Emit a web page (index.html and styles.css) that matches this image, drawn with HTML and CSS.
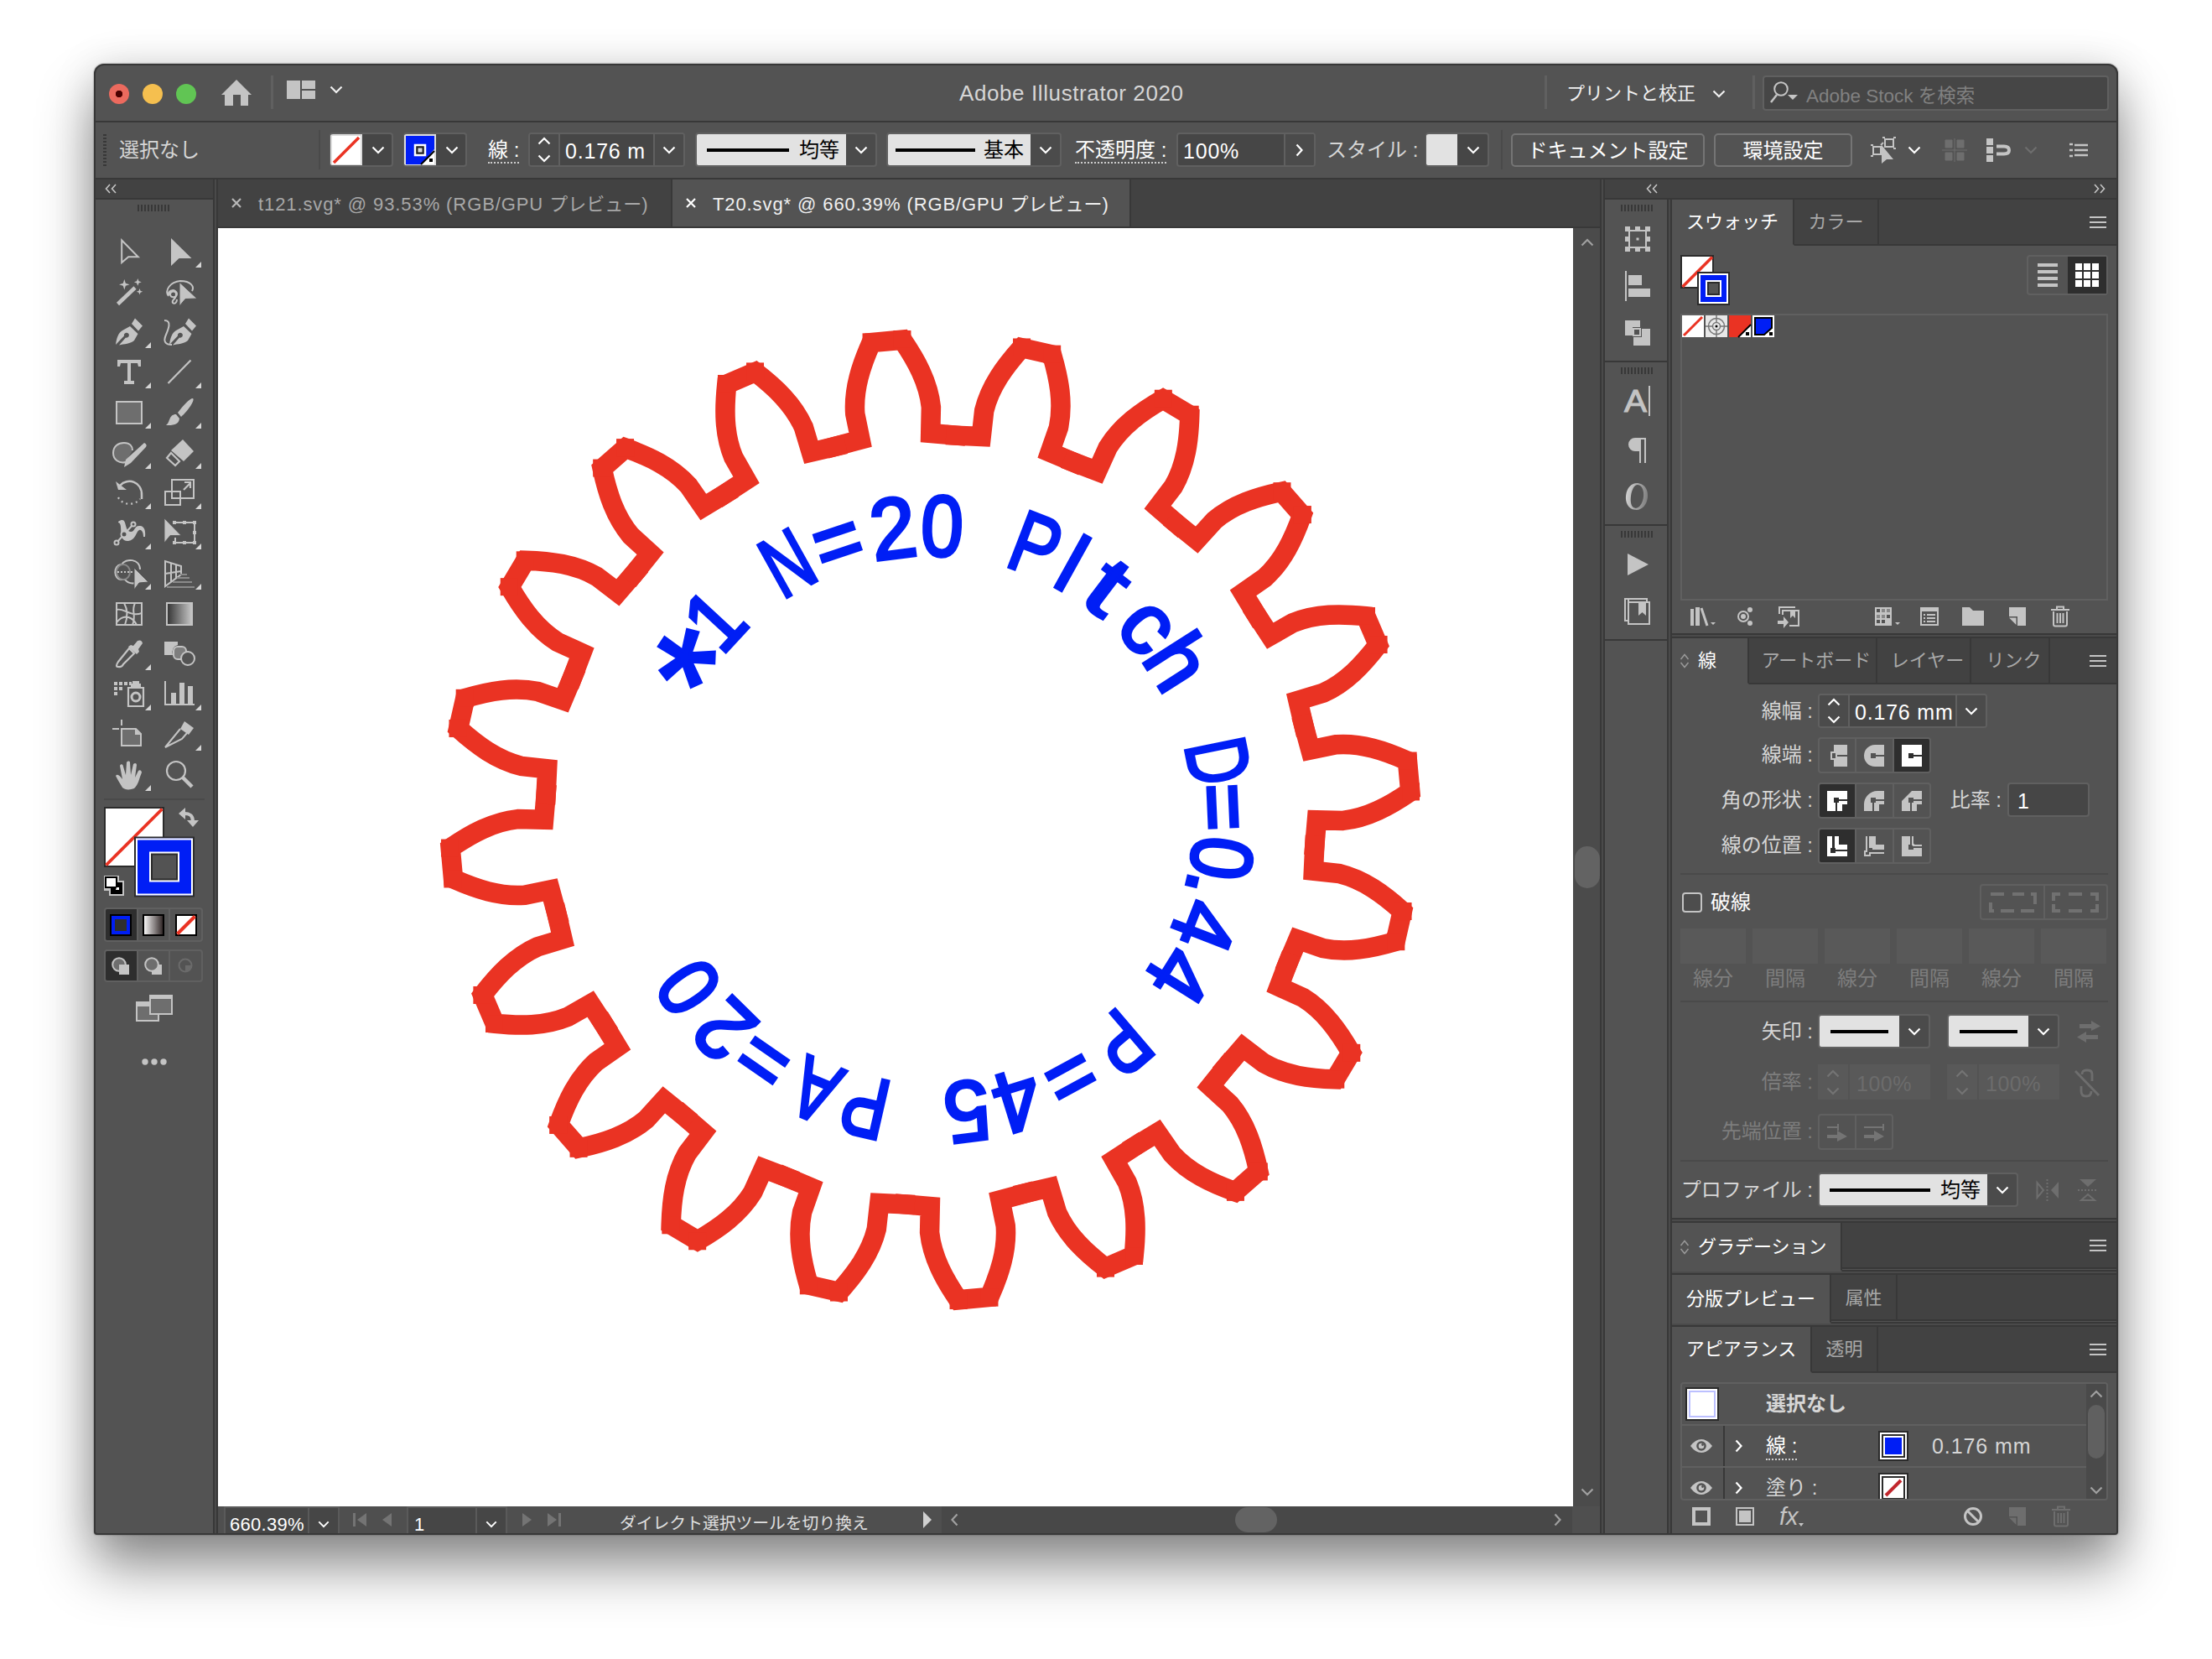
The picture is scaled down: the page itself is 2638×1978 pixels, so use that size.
FILE: index.html
```html
<!DOCTYPE html>
<html lang="ja">
<head>
<meta charset="utf-8">
<title>Adobe Illustrator 2020</title>
<link rel="stylesheet" href="styles.css">
</head>
<body>
<svg class="defs" width="0" height="0">
  <defs>
    <linearGradient id="gDark"><stop offset="0" stop-color="#333"/><stop offset="1" stop-color="#c8c8c8"/></linearGradient>
    <linearGradient id="gLight"><stop offset="0" stop-color="#fff"/><stop offset="1" stop-color="#2a2020"/></linearGradient>
    <linearGradient id="gO"><stop offset="0" stop-color="#d0d0d0"/><stop offset="1" stop-color="#808080"/></linearGradient>
  </defs>
  <symbol id="down" viewBox="0 0 16 10"><path d="M1.5 1.5 8 8l6.500-6.500" fill="none" stroke="currentColor" stroke-width="2.200"/></symbol>
  <symbol id="up" viewBox="0 0 16 10"><path d="M1.500 8.500 8 2l6.500 6.500" fill="none" stroke="currentColor" stroke-width="2.200"/></symbol>
  <symbol id="right" viewBox="0 0 10 16"><path d="M1.500 1.500 7.500 8l-6 6.500" fill="none" stroke="currentColor" stroke-width="2.200"/></symbol>
  <symbol id="left" viewBox="0 0 10 16"><path d="M8.500 1.500 2.500 8l6 6.500" fill="none" stroke="currentColor" stroke-width="2.200"/></symbol>
  <symbol id="dleft" viewBox="0 0 14 12"><path d="M6 1 1.500 6 6 11M13 1 8.500 6 13 11" fill="none" stroke="currentColor" stroke-width="1.600"/></symbol>
  <symbol id="dright" viewBox="0 0 14 12"><path d="M1 1 5.500 6 1 11M8 1l4.500 5L8 11" fill="none" stroke="currentColor" stroke-width="1.600"/></symbol>
  <symbol id="menu" viewBox="0 0 20 16"><path d="M0 2h20M0 8h20M0 14h20" stroke="currentColor" stroke-width="2"/></symbol>
  <symbol id="diamond" viewBox="0 0 12 18"><path d="M1.500 7 6 1.500 10.500 7M1.500 11 6 16.500 10.500 11" fill="none" stroke="currentColor" stroke-width="1.500"/></symbol>
  <symbol id="close" viewBox="0 0 12 12"><path d="M1 1l10 10M11 1 1 11" stroke="currentColor" stroke-width="2.200"/></symbol>
  <symbol id="corner" viewBox="0 0 60 48"><path d="M56 36v7h-7z" fill="#d6d6d6"/></symbol>
  <symbol id="trash" viewBox="0 0 22 26"><path d="M0 5h22M7 4V1.500h8V4M3 7v15.500q0 2 2 2h12q2 0 2-2V7M7.500 9v12M11 9v12M14.500 9v12" fill="none" stroke="currentColor" stroke-width="2"/></symbol>
  <symbol id="newpage" viewBox="0 0 20 22"><path d="M0 0h20v22H10V11H0z" fill="currentColor"/><path d="M0 12.500h8.500V21z" fill="currentColor"/></symbol>
  <symbol id="eye" viewBox="0 0 26 18"><path d="M0 9Q6 1 13 1t13 8q-6 8-13 8T0 9z" fill="currentColor"/><circle cx="13" cy="9" r="5.800" fill="#535353"/><circle cx="13" cy="9" r="3.300" fill="currentColor"/><circle cx="14.500" cy="7.500" r="1.400" fill="#535353"/></symbol>
</svg>

<div class="window">
  <header class="titlebar">
    <div class="lights"><i class="red"></i><i class="amber"></i><i class="green"></i></div>
    <svg class="home" width="36" height="32"><path d="M18 0 36 18h-4v13h-9V18h-9v13H4V18H0z" fill="#c4c4c4"/></svg>
    <i class="vsep"></i>
    <svg class="lay" width="34" height="22"><path d="M0 0h16v22H0zM18 0h16v10H18zM18 12h16v10H18z" fill="#c4c4c4"/></svg>
    <svg class="lchev" width="16" height="10"><use href="#down"/></svg>
    <span class="apptitle">Adobe Illustrator 2020</span>
    <i class="vsep"></i>
    <span class="workspace">プリントと校正</span>
    <svg class="wchev" width="16" height="10"><use href="#down"/></svg>
    <i class="vsep"></i>
    <div class="search"><svg width="36" height="30"><circle cx="14" cy="10" r="7.800" fill="none" stroke="#c4c4c4" stroke-width="2"/><path d="M9 17 2 26" stroke="#c4c4c4" stroke-width="2.500"/><path d="M22 17h12l-6 6z" fill="#c4c4c4"/></svg><span>Adobe Stock を検索</span></div>
  </header>

  <div class="control">
    <i class="dots"></i>
    <span class="lab sel">選択なし</span>
    <i class="dsep"></i>
    <div class="drop"><svg width="38" height="38"><path d="M0 0h38v38H0z" fill="#dcdcdc"/><path d="M2 2h34v34H2z" fill="#fff"/><path d="M4 34 34 4" stroke="#ea3323" stroke-width="3.500"/></svg><b><svg width="16" height="10"><use href="#down"/></svg></b></div>
    <div class="drop"><svg width="38" height="38"><path d="M0 0h38v38H0z" fill="#dcdcdc"/><path d="M2 2h34v34H2z" fill="#001ef5"/><path d="M13 13h12v12H13z" fill="#535353" stroke="#fff" stroke-width="2.500"/><path d="M15.500 15.500h7v7h-7z" fill="#ddd" stroke="#222" stroke-width="2"/><path d="M36 18v18H20z" fill="#fff"/><path d="M36 20 20 36" stroke="#000" stroke-width="2"/><path d="M30 29h4v4h-4z"/></svg><b><svg width="16" height="10"><use href="#down"/></svg></b></div>
    <span class="lab white under">線 :</span>
    <div class="spin w187"><b><svg width="16" height="10"><use href="#up"/></svg><svg width="16" height="10"><use href="#down"/></svg></b><em>0.176 m</em><b><svg width="16" height="10"><use href="#down"/></svg></b></div>
    <div class="brush w216"><u></u><span>均等</span><b><svg width="16" height="10"><use href="#down"/></svg></b></div>
    <div class="brush w209"><u></u><span>基本</span><b><svg width="16" height="10"><use href="#down"/></svg></b></div>
    <span class="lab white under">不透明度 :</span>
    <div class="spin w166"><em>100%</em><b><svg width="10" height="16"><use href="#right"/></svg></b></div>
    <span class="lab">スタイル :</span>
    <div class="drop"><i class="blank"></i><b><svg width="16" height="10"><use href="#down"/></svg></b></div>
    <i class="dsep"></i>
    <span class="btn w231">ドキュメント設定</span>
    <span class="btn w165">環境設定</span>
    <svg width="34" height="34" class="ic"><path d="M4 13h9v9H4zM18 4h10v9H18zM1 11h3M13 11l3-3M1 24h3M15 2h3M28 2h3M28 15h3" fill="none" stroke="#c4c4c4" stroke-width="2"/><path d="M14 11v22l6-5h8z" fill="#c4c4c4"/></svg>
    <svg width="16" height="10"><use href="#down"/></svg>
    <svg width="30" height="28" class="dim"><path d="M4 2h8v9H4zM18 2h8v9h-8zM4 17h8v9H4zM18 17h8v9h-8zM15 0v28M0 14h30" fill="currentColor" stroke="currentColor"/></svg>
    <svg width="30" height="28" class="ic"><path d="M0 0h8v8H0zM0 10h8v8H0zM0 20h8v8H0z" fill="currentColor"/><path d="M12 9.500h9q6 0 6 4.500t-6 4.500h-9" fill="none" stroke="currentColor" stroke-width="4"/></svg>
    <svg width="16" height="10" class="dim"><use href="#down"/></svg>
    <svg width="22" height="18" class="ic"><path d="M0 2h4M6 3h16M0 9h4M6 9h16M0 16h4M6 15h16" stroke="currentColor" stroke-width="2.500"/></svg>
  </div>

  <main>
    <aside class="toolcol">
      <div class="colhead"><svg width="14" height="12"><use href="#dleft"/></svg></div>
      <i class="grip"></i>
      <div class="tools">
        <svg><path d="M21.200 10.500v26.500l8-6.800h11.500z" fill="none" stroke="#c4c4c4" stroke-width="2"/></svg>
        <svg><path d="M20 8v33l9.500-9H44.500z"/><use href="#corner"/></svg>
        <svg><path d="M16.500 38.500 37 19" stroke="#c4c4c4" stroke-width="4.500"/><path d="M24.300 9l1.500 4.700 4.700 1.500-4.700 1.500-1.500 4.800-1.500-4.800-4.800-1.500 4.800-1.500zM40.300 8l1.200 3.200 3.300 1.100-3.300 1.200-1.200 3.300-1.200-3.300-3.200-1.200 3.200-1.100zM42.500 20l1 2.700 2.700 1-2.700 1-1 2.600-1-2.600-2.700-1 2.700-1z"/></svg>
        <svg><path d="M17 29c-5-7 2-17 14-18 13 0 17 7 14 12M17 28c0-8 9-7 10-2 0 5-8 6-8 1 0-4 7-5 7 0 0 7-6 6-4 10 2 2 5 0 5-4" fill="none" stroke="#c4c4c4" stroke-width="2"/><path d="M30 12.500V41l7-8.500 14-.5z" stroke="#535353"/></svg>
        <svg><path d="M14 39c1-8 3-14 8-17l9-5 9.500 9-4.500 8c-4 4-12 4-18 5.500l8-9a3 3 0 1 0-2-2zM33 14l4-6.500 9 9-5 6z"/><use href="#corner"/></svg>
        <svg><path d="M12 10c9 0 5 10 2 17-4 9 0 12 7 12" fill="none" stroke="#c4c4c4" stroke-width="2"/><path d="M18 39c1-8 3-14 8-17l9-5 9.500 9-4.500 8c-4 4-12 4-18 5.500l8-9a3 3 0 1 0-2-2zM37 14l4-6.500 9 9-5 6z"/></svg>
        <svg><path d="M16 9h28v8h-3l-1-4h-8v21h4v4H24v-4h4V13h-8l-1 4h-3z"/><use href="#corner"/></svg>
        <svg><path d="M16.500 37 43.500 9.500" stroke="#c4c4c4" stroke-width="2.200"/><use href="#corner"/></svg>
        <svg><path d="M15 11h30v26H15z" fill="#6e6e6e" stroke="#c4c4c4" stroke-width="2"/><use href="#corner"/></svg>
        <svg><path d="M46 7c3 2-6 15-14 22l-4-5c7-9 14-17 18-17zM26 26l4 5c-1 8-8 8-16 8 5-3 3-13 12-13z"/><use href="#corner"/></svg>
        <svg><path d="M26 35c-8 2-15-3-15-11s6-12 13-12 10 4 10 9" fill="#6e6e6e" stroke="#c4c4c4" stroke-width="2"/><path d="M48 12q4 2 2 5L32 36l-8 5 2-9z"/><use href="#corner"/></svg>
        <svg><path d="M34 8l13 14-12 12-15-13z"/><path d="M20 24l10 10-5 5-10-9z" fill="none" stroke="#c4c4c4" stroke-width="2.200"/><use href="#corner"/></svg>
        <svg><path d="M19 15c9-10 27-5 26 12v4" fill="none" stroke="#c4c4c4" stroke-width="2.500"/><path d="M14 10l3 10h10z"/><path d="M17 29c5 10 20 10 26 2" fill="none" stroke="#c4c4c4" stroke-width="2.200" stroke-dasharray="2 4"/><use href="#corner"/></svg>
        <svg><path d="M21 8h26v22H21zM13 22h18v16H13z" fill="none" stroke="#c4c4c4" stroke-width="2"/><path d="M35 20l8-8m-7-1h7v7" fill="none" stroke="#c4c4c4" stroke-width="2.200"/><use href="#corner"/></svg>
        <svg><path d="M17 10c12-8 6 12 15 12 5 0 4-7 10-7 6-1 8 6 7 13h-2c0-5-2-9-5-8-4 2-4 12-13 13-14 1-5-21-12-22z"/><path d="M15 35 35 13" stroke="#c4c4c4" stroke-width="2"/><g fill="#535353" stroke="#c4c4c4" stroke-width="2"><circle cx="15" cy="35" r="2.500"/><circle cx="35" cy="13" r="2.500"/><circle cx="24" cy="25" r="3.500"/></g><use href="#corner"/></svg>
        <svg><path d="M24 11h24v24H25v-6" fill="none" stroke="#c4c4c4" stroke-width="2"/><path d="M22 9h4v4h-4zM34 9h4v4h-4zM46 9h4v4h-4zM46 21h4v4h-4zM46 33h4v4h-4zM34 33h4v4h-4zM22 33h4v4h-4z"/><path d="M12 6v29l7-8.500h13z" stroke="#535353" stroke-width=".8"/><use href="#corner"/></svg>
        <svg><path d="M20 13c-9 1-9 18 1 18h4c4 5 9 5 13 4M21 13c5-8 22-7 22 6" fill="none" stroke="#c4c4c4" stroke-width="2"/><ellipse cx="23" cy="22" rx="8" ry="9" fill="none" stroke="#888" stroke-width="2"/><path d="M16 22h20" stroke="#c4c4c4" stroke-width="2" stroke-dasharray="2 2"/><path d="M36 17v26l6-8 11-1z" stroke="#535353"/><use href="#corner"/></svg>
        <svg><path d="M13 9v30l19-14V15zM20 11v23M26 13v16M13 24l19-3" fill="none" stroke="#c4c4c4" stroke-width="2"/><path d="M31 25h8M27 29h15M22 34h23M15 40h33" stroke="#8a8a8a" stroke-width="2"/><use href="#corner"/></svg>
        <svg><path d="M15 11h30v26H15z" fill="none" stroke="#c4c4c4" stroke-width="2"/><path d="M15 19c8-3 16 9 30 4M15 34c10-12 20-5 24 3M24 11c5 9 4 18 1 26M37 11c-5 10 2 14-3 26" fill="none" stroke="#c4c4c4" stroke-width="2"/></svg>
        <svg><path d="M15 11h30v26H15z" fill="url(#gDark)" stroke="#c4c4c4" stroke-width="2"/></svg>
        <svg><path d="M32 13l3 1 5-6q5-2 6 3l-5 7 1 3-3 3-10-9z"/><path d="M30 17 17 33q-4 6 0 6 4 1 6-3l13-13z" fill="none" stroke="#c4c4c4" stroke-width="2.200"/><use href="#corner"/></svg>
        <svg><path d="M12 9h16v4q-8 2-6 12H12z"/><rect x="23" y="15" width="15" height="15" rx="5" fill="#7e7e7e" stroke="#c4c4c4" stroke-width="2"/><circle cx="40" cy="29" r="8" fill="#535353" stroke="#c4c4c4" stroke-width="2"/></svg>
        <svg><path d="M29 16h18v22H29z" fill="none" stroke="#c4c4c4" stroke-width="2.200"/><circle cx="38" cy="27" r="5" fill="none" stroke="#c4c4c4" stroke-width="3"/><path d="M34 8h8v3h2v4H32v-4h2zM12 9h4v4h-4zM18 9h4v4h-4zM24 9h4v4h-4zM12 15h4v4h-4zM18 15h4v4h-4zM12 21h4v4h-4zM30 9h3v4h-3z"/><use href="#corner"/></svg>
        <svg><path d="M13 8v28h35" fill="none" stroke="#c4c4c4" stroke-width="2"/><path d="M20 22h6v14h-6zM30 10h6v26h-6zM40 14h6v22h-6z"/><use href="#corner"/></svg>
        <svg><path d="M21 17h17l6 6v14H21z" fill="#6e6e6e" stroke="#c4c4c4" stroke-width="2"/><path d="M37 17v7h7zM20 6h2v7h-2zM10 16h8v2h-8z"/></svg>
        <svg><path d="M36 8l11 8-6 8-10-7z"/><path d="M31 17 13 39l20-10 6-7" fill="none" stroke="#c4c4c4" stroke-width="2"/><use href="#corner"/></svg>
        <svg><path d="M22 39c-3-5-6-10-8-14 2-3 5 0 8 4L19 13c1-3 4-2 4 1l3 10 1-15c1-2 4-2 4 0l1 15 3-13c2-2 4-1 4 1l-2 15 4-8c2-2 4 0 4 2-3 7-4 15-9 19-5 2-11 2-14-1z"/><use href="#corner"/></svg>
        <svg><circle cx="26" cy="19" r="11" fill="none" stroke="#c4c4c4" stroke-width="2.200"/><path d="M34 27l11 11" stroke="#c4c4c4" stroke-width="4.500"/></svg>
      </div>
      <hr>
      <svg class="fillstroke" width="120" height="110">
        <path d="M1 1h70v70H1z" fill="#fff" stroke="#2b2b2b" stroke-width="2"/><path d="M2.500 69.500 69.500 2.500" stroke="#ea3323" stroke-width="3.800"/>
        <path d="M37 36.500h70v70H37z" fill="#001ef5" stroke="#2b2b2b" stroke-width="2"/><path d="M39 38.500h66v66H39z" fill="none" stroke="#fff" stroke-width="2"/><path d="M54 53.500h36v36H54z" fill="#fff"/><path d="M57 56.500h30v30H57z" fill="#535353" stroke="#2b2b2b" stroke-width="2"/>
        <path d="M94 8q12-1 12 9" fill="none" stroke="#c4c4c4" stroke-width="4"/><path d="M89 8l8-7v14zM99 16h14l-7 8z" fill="#c4c4c4"/>
        <path d="M0 82h18v6h6v18H6v-6H0z" fill="#c4c4c4"/><path d="M8 90h14v14H8z"/><path d="M2 84h13v12H2z" fill="#fff" stroke="#000" stroke-width="2"/><path d="M15 96h3v3h-4z" fill="#fff"/>
      </svg>
      <div class="trio t42">
        <span class="on"><svg width="26" height="26"><path d="M1 1h24v24H1z" stroke="#000" stroke-width="2" fill="#001ef5"/><path d="M6 6h14v14H6z" fill="#2f2f2f"/></svg></span>
        <span><svg width="26" height="26"><path d="M1 1h24v24H1z" stroke="#000" stroke-width="2" fill="url(#gLight)"/></svg></span>
        <span><svg width="26" height="26"><path d="M1 1h24v24H1z" stroke="#000" stroke-width="2" fill="#fff"/><path d="M2.500 23.500l21-21" stroke="#ea3323" stroke-width="4"/></svg></span>
      </div>
      <div class="trio t38">
        <span class="on"><svg width="22" height="22"><circle cx="9" cy="9" r="7.800" fill="#6e6e6e" stroke="#c4c4c4" stroke-width="2"/><path d="M9 9h12v12H9z" fill="#c4c4c4"/></svg></span>
        <span><svg width="22" height="22"><path d="M9 9h12v12H9z" fill="#c4c4c4"/><circle cx="9" cy="9" r="7.800" fill="#6e6e6e" stroke="#c4c4c4" stroke-width="2"/></svg></span>
        <span><svg width="22" height="22"><circle cx="10" cy="10" r="7.500" fill="none" stroke="#6b6b6b" stroke-width="2"/><path d="M10 10h7q0 6-7 7z" fill="#6b6b6b"/></svg></span>
      </div>
      <svg class="screens" width="44" height="32"><path d="M1 11h26v20H1z" fill="#6e6e6e" stroke="#c4c4c4" stroke-width="2"/><path d="M0 8h18v6H0z" fill="#c4c4c4"/><path d="M17 3h26v20H17z" fill="#6e6e6e" stroke="#c4c4c4" stroke-width="2"/><path d="M16 0h28v5H16z" fill="#c4c4c4"/></svg>
      <svg class="more" width="30" height="8"><circle cx="4" cy="4" r="3.700"/><circle cx="15" cy="4" r="3.700"/><circle cx="26" cy="4" r="3.700"/></svg>
    </aside>
    <i class="gutter"></i>

    <section class="doc">
      <nav class="doctabs">
        <div class="dtab first"><svg width="12" height="12"><use href="#close"/></svg><span><q>t121.svg* @ 93.53% (RGB/GPU </q>プレビュー)</span></div>
        <div class="dtab active"><svg width="12" height="12"><use href="#close"/></svg><span><q>T20.svg* @ 660.39% (RGB/GPU </q>プレビュー)</span></div>
      </nav>
      <div class="stage">
        <svg id="art" width="1616" height="1524" viewBox="260 272 1616 1524"></svg>
        <div class="vscroll"><svg width="16" height="10"><use href="#up"/></svg><i></i><svg width="16" height="10"><use href="#down"/></svg></div>
      </div>
      <footer class="status">
        <div class="sbox zoomv"><em>660.39%</em><b><svg width="14" height="9"><use href="#down"/></svg></b></div>
        <svg class="nav1" width="48" height="18"><path d="M1 1h3v16H1zM17 1v16L6 9zM47 1v16L36 9z"/></svg>
        <div class="sbox page"><em>1</em><b><svg width="14" height="9"><use href="#down"/></svg></b></div>
        <svg class="nav2" width="48" height="18"><path d="M1 1v16l11-8zM31 1v16l11-8zM44 1h3v16h-3z"/></svg>
        <span class="hint">ダイレクト選択ツールを切り換え</span>
        <svg class="play" width="12" height="20"><path d="M1 0v20l10-10z"/></svg>
        <div class="hscroll"><svg width="10" height="16"><use href="#left"/></svg><i></i><svg width="10" height="16"><use href="#right"/></svg></div>
      </footer>
    </section>
    <i class="gutter"></i>

    <section class="side">
      <div class="colhead"><svg width="14" height="12" class="h1"><use href="#dleft"/></svg><svg width="14" height="12"><use href="#dright"/></svg></div>
      <div class="sidegrid">
        <div class="strip">
          <div class="sgroup g1"><i class="grip"></i>
            <svg width="30" height="30"><path d="M5 5h20v20H5z" fill="none" stroke="#c4c4c4" stroke-width="2"/><path d="M0 0h6v6H0zM12 0h6v5h-6zM24 0h6v6h-6zM0 12h5v6H0zM25 12h5v6h-5zM0 24h6v6H0zM12 25h6v5h-6zM24 24h6v6h-6zM13.500 13.500h3v3h-3z"/></svg>
            <svg width="30" height="36"><path d="M0 0h2v36H0zM4 5h16v12H4zM4 21h26v10H4z"/></svg>
            <svg width="30" height="30"><path d="M0 0h18v8h-9v10H0zM20 10h10v20H10V20h10z"/><path d="M10 10h8v8h-8z" fill="none" stroke="#c4c4c4" stroke-width="2"/></svg>
          </div>
          <div class="sgroup g2"><i class="grip"></i>
            <svg width="30" height="36"><text x="-1" y="31" font-size="37" textLength="27" lengthAdjust="spacingAndGlyphs" font-family="Liberation Sans" stroke="#c4c4c4">A</text><path d="M28 0h2v36h-2z"/></svg>
            <svg width="24" height="30"><path d="M22 0v2h0v28h-2V2h-4v28h-2V16H9a8 8 0 0 1 0-16z"/></svg>
            <svg width="30" height="34"><g transform="rotate(8 14 17)"><path fill="url(#gO)" fill-rule="evenodd" d="M14 1c8 0 13 7 13 16s-5 16-13 16S1 26 1 17 6 1 14 1zm0 2c-5 0-7 7-7 14s2 14 7 14 8-7 8-14-3-14-8-14z"/></g></svg>
          </div>
          <div class="sgroup g3"><i class="grip"></i>
            <svg width="26" height="26"><path d="M1 0v26l25-13z"/></svg>
            <svg width="32" height="32"><path d="M5 5V1H1v26h4M5 5h25v26H5zM27 4V1H4" fill="none" stroke="#c4c4c4" stroke-width="2"/><path d="M17 5h9v16l-4.500-4-4.500 4z"/></svg>
          </div>
        </div>
        <i class="gutter"></i>

        <div class="panels">
          <section class="panel swatches">
            <nav class="ptabs"><span class="on w144">スウォッチ</span><span class="w101">カラー</span><svg width="20" height="16"><use href="#menu"/></svg></nav>
            <div class="swhead">
              <svg width="60" height="60"><path d="M1 1h38v38H1z" fill="#fff" stroke="#2b2b2b" stroke-width="2"/><path d="M2.500 38 38 2.500" stroke="#ea3323" stroke-width="3.500"/><path d="M21 21h37v38H21z" fill="#001ef5" stroke="#2b2b2b" stroke-width="2"/><path d="M23 23h33v34H23z" fill="none" stroke="#fff" stroke-width="2"/><path d="M31 31h17v18H31z" fill="#535353" stroke="#fff" stroke-width="2"/><path d="M33 33h13v14H33z" fill="none" stroke="#2b2b2b" stroke-width="2"/></svg>
              <div class="views"><span><svg width="24" height="28"><path d="M0 2h24M0 10h24M0 18h24M0 26h24" stroke="#c4c4c4" stroke-width="4"/></svg></span><span class="on"><svg width="28" height="28"><path d="M0 0h8v8H0zM10 0h8v8h-8zM20 0h8v8h-8zM0 10h8v8H0zM10 10h8v8h-8zM20 10h8v8h-8zM0 20h8v8H0zM10 20h8v8h-8zM20 20h8v8h-8z" fill="#fff"/></svg></span></div>
            </div>
            <div class="swlist">
              <svg width="26" height="26"><path d="M0 0h26v26H0z" fill="#fff"/><path d="M2 24 24 2" stroke="#ea3323" stroke-width="3"/></svg>
              <svg width="26" height="26"><path d="M0 0h26v26H0z" fill="#e8e8e8"/><g fill="none" stroke="#777" stroke-width="1.500"><circle cx="13" cy="13" r="9.500"/><circle cx="13" cy="13" r="4.500"/><path d="M13 0v9M13 17v9M0 13h9M17 13h9"/></g><circle cx="13" cy="13" r="1.500"/></svg>
              <svg width="26" height="26"><path d="M0 0h26v26H0z" fill="#ea3323"/><path d="M26 11v15H11z" fill="#fff"/><path d="M26 11 11 26" stroke="#000" stroke-width="2"/><path d="M20 20h4v4h-4z"/></svg>
              <svg width="26" height="26"><path d="M0 0h26v26H0z" fill="#fff"/><path d="M3 3h20v12l-9 8H3z" fill="#001ef5" stroke="#000" stroke-width="2"/><path d="M20 20h4v4h-4z"/></svg>
            </div>
            <div class="swfoot">
              <svg width="32" height="22"><path d="M0 2h4v20H0zM6 0h5v22H6z"/><path d="M13 1l7 21" stroke="#c4c4c4" stroke-width="3"/><path d="M24 18h6l-3 3z"/></svg>
              <svg width="18" height="22"><circle cx="7" cy="11" r="6" fill="none" stroke="#c4c4c4" stroke-width="2"/><circle cx="7" cy="11" r="3"/><circle cx="15" cy="3" r="3"/><circle cx="15" cy="19" r="3"/></svg>
              <svg width="26" height="24"><path d="M2 9V1h19M6 10V5h19v18H14" fill="none" stroke="#c4c4c4" stroke-width="2"/><path d="M15 5h6v9l-3-3-3 3zM0 17h7v-5l6 7-6 7v-5H0z"/></svg>
              <svg width="32" height="22"><path d="M0 0h20v22H0z"/><path d="M2 2h4v4H2zM14 9h4v4h-4zM8 15h4v4H8zM2 15h4v4H2z" fill="#535353"/><path d="M8 2h4v4H8zM14 2h4v4h-4zM2 9h4v4H2zM8 9h4v4H8z" fill="#888"/><path d="M24 18h6l-3 3z"/></svg>
              <svg width="22" height="22"><path d="M1 1h20v20H1z" fill="none" stroke="#c4c4c4" stroke-width="2"/><path d="M1 1h20v4H1zM4 8h2v2H4zM8 8h10v2H8zM4 12h2v2H4zM8 12h10v2H8zM4 16h2v2H4zM8 16h10v2H8z"/></svg>
              <svg width="26" height="22"><path d="M0 0h9l4 4h13v18H0z"/></svg>
              <svg width="20" height="22"><use href="#newpage"/></svg>
              <svg width="22" height="26"><use href="#trash"/></svg>
            </div>
          </section>

          <section class="panel stroke">
            <nav class="ptabs"><span class="on w90"><svg width="12" height="18"><use href="#diamond"/></svg>線</span><span class="w155">アートボード</span><span class="w112">レイヤー</span><span class="w94">リンク</span><svg width="20" height="16"><use href="#menu"/></svg></nav>
            <div class="row r1"><label>線幅 :</label><div class="spin w202"><b><svg width="16" height="10"><use href="#up"/></svg><svg width="16" height="10"><use href="#down"/></svg></b><em>0.176 mm</em><b><svg width="16" height="10"><use href="#down"/></svg></b></div></div>
            <div class="row r2"><label>線端 :</label><div class="trio b43">
              <span><svg width="24" height="26"><path d="M8 0h16v12H8zM8 14h16v12H8z"/><path d="M5 9h6v8H5z" fill="#535353" stroke="#c4c4c4" stroke-width="2"/></svg></span>
              <span><svg width="24" height="26"><path d="M24 0v12H14v-2H8v6h6v-2h10v12H13A13 13 0 0 1 13 0z"/></svg></span>
              <span class="on"><svg width="24" height="26"><path d="M0 0h24v12H14v-2H8v6h6v-2h10v12H0z"/></svg></span></div></div>
            <div class="row r3"><label>角の形状 :</label><div class="trio b43">
              <span class="on"><svg width="24" height="24"><path d="M0 0h24v10H14V8H8v6h2v10H0zM12 14h2v-2h10v4h-6v8h-6z"/></svg></span>
              <span><svg width="24" height="24"><path d="M24 0v10H14V8H8v6h2v10H0V16A16 16 0 0 1 16 0zM12 14h2v-2h10v4h-6v8h-6z"/></svg></span>
              <span><svg width="24" height="24"><path d="M12 0h12v10H14V8H8v6h2v10H0V12zM12 14h2v-2h10v4h-6v8h-6z"/></svg></span></div>
              <label class="ratio">比率 :</label><div class="spin w98"><em>1</em></div></div>
            <div class="row r4"><label>線の位置 :</label><div class="trio b43">
              <span class="on"><svg width="24" height="24"><path d="M0 0h6v14H4v6h6v-2h14v6H0zM9 0h5v10h10v6H10v-2H9z"/></svg></span>
              <span><svg width="24" height="24"><path d="M6 0h8v10h10v6H10v-2H6zM2 0h2v14H2z"/><path d="M3 14v4h-2v5h6v-3h17" fill="none" stroke="#c4c4c4" stroke-width="2"/></svg></span>
              <span><svg width="24" height="24"><path d="M0 0h10v10H8v6h6v-2h10v10H0z"/><path d="M13 0v10h1v1h10" fill="none" stroke="#c4c4c4" stroke-width="2"/></svg></span></div></div>
            <hr>
            <div class="dash"><i class="check"></i><span>破線</span><div class="pair"><span><svg width="56" height="24"><path d="M2 2h16M28 2h14M50 2h5v12M2 12v10h4M14 22h16M38 22h16" fill="none" stroke="#717171" stroke-width="4"/></svg></span><span><svg width="56" height="24"><path d="M2 10V2h8M20 2h16M46 2h8v8M54 14v8h-8M36 22H20M10 22H2v-8" fill="none" stroke="#717171" stroke-width="4"/></svg></span></div></div>
            <div class="dashgrid"><p><i></i>線分</p><p><i></i>間隔</p><p><i></i>線分</p><p><i></i>間隔</p><p><i></i>線分</p><p><i></i>間隔</p></div>
            <hr>
            <div class="row r5"><label>矢印 :</label><div class="brush w134"><u></u><b><svg width="16" height="10"><use href="#down"/></svg></b></div><div class="brush w134 second"><u></u><b><svg width="16" height="10"><use href="#down"/></svg></b></div>
              <svg class="dim swap" width="28" height="26"><path d="M3 4h14V0l11 6.500L17 12V9H3zM25 17H11v-4L0 19.500 11 26v-4h14z" fill="currentColor"/></svg></div>
            <div class="row r6 off"><label>倍率 :</label><div class="ghost"><b><svg width="16" height="10"><use href="#up"/></svg><svg width="16" height="10"><use href="#down"/></svg></b><em>100%</em></div><div class="ghost second"><b><svg width="16" height="10"><use href="#up"/></svg><svg width="16" height="10"><use href="#down"/></svg></b><em>100%</em></div>
              <svg class="dim link" width="30" height="34"><path d="M9 6q0-5 5-5h2q5 0 5 5v8M8 20v6q0 6 6 6t6-6M1 2l28 29" fill="none" stroke="currentColor" stroke-width="2.800"/></svg></div>
            <div class="row r7 off"><label>先端位置 :</label><div class="trio b43 two">
              <span><svg width="24" height="20"><path d="M0 4h13M13 0v8" stroke="#747474" stroke-width="2"/><path d="M0 13h12V8l12 7-12 6v-4H0z" fill="#747474"/></svg></span>
              <span><svg width="24" height="20"><path d="M0 4h23M23 0v8" stroke="#747474" stroke-width="2"/><path d="M0 13h12V8l12 7-12 6v-4H0z" fill="#747474"/></svg></span></div></div>
            <hr>
            <div class="row r8"><label>プロファイル :</label><div class="brush w239"><u></u><span>均等</span><b><svg width="16" height="10"><use href="#down"/></svg></b></div>
              <svg class="dim f1" width="28" height="26"><path d="M1.500 4v18L9 13z" fill="none" stroke="currentColor" stroke-width="2"/><path d="M27 3v20l-9-10z" fill="currentColor"/><path d="M13.500 0v26" stroke="currentColor" stroke-width="2" stroke-dasharray="2 2"/></svg>
              <svg class="dim f2" width="24" height="28"><path d="M2 1h20l-10 9z" fill="currentColor"/><path d="M4 26h16l-8-7z" fill="none" stroke="currentColor" stroke-width="2"/><path d="M0 14h24" stroke="currentColor" stroke-width="2" stroke-dasharray="2 2"/></svg></div>
          </section>

          <section class="panel slim"><nav class="ptabs"><span class="on w201"><svg width="12" height="18"><use href="#diamond"/></svg>グラデーション</span><svg width="20" height="16"><use href="#menu"/></svg></nav></section>
          <section class="panel slim"><nav class="ptabs"><span class="on w188">分版プレビュー</span><span class="w79">属性</span></nav></section>

          <section class="panel appear">
            <nav class="ptabs"><span class="on w166b">アピアランス</span><span class="w79">透明</span><svg width="20" height="16"><use href="#menu"/></svg></nav>
            <div class="alist">
              <div class="arows">
                <div class="arow head"><i class="thumb"></i><strong>選択なし</strong></div>
                <div class="arow"><svg width="26" height="18"><use href="#eye"/></svg><i></i><svg width="10" height="16" class="wh"><use href="#right"/></svg><span class="white"><s>線 :</s></span><svg width="36" height="36"><path d="M0 0h36v36H0z" fill="#2b2b2b"/><path d="M2 2h32v32H2z" fill="#fff"/><path d="M4 4h28v28H4z" fill="#2b2b2b"/><path d="M6 6h24v24H6z" fill="#fff"/><path d="M8 8h20v20H8z" fill="#001ef5"/></svg><q>0.176 mm</q></div>
                <div class="arow"><svg width="26" height="18"><use href="#eye"/></svg><i></i><svg width="10" height="16" class="wh"><use href="#right"/></svg><span>塗り :</span><svg width="36" height="36"><path d="M0 0h36v36H0z" fill="#2b2b2b"/><path d="M2 2h32v32H2z" fill="#fff"/><path d="M4 4h28v28H4z" fill="#2b2b2b"/><path d="M6 6h24v24H6z" fill="#fff"/><path d="M9 27 27 9" stroke="#c1272d" stroke-width="4"/></svg></div>
              </div>
              <div class="ascroll"><svg width="16" height="10"><use href="#up"/></svg><i></i><svg width="16" height="10"><use href="#down"/></svg></div>
            </div>
            <div class="afoot">
              <svg width="22" height="22"><path d="M2 2h18v18H2z" fill="none" stroke="#c4c4c4" stroke-width="4"/></svg>
              <svg width="22" height="22"><path d="M1 1h20v20H1z" fill="none" stroke="#c4c4c4" stroke-width="2"/><path d="M4 4h14v14H4z"/></svg>
              <span class="fx">fx<svg width="6" height="4"><path d="M0 0h6L3 4z"/></svg></span>
              <svg width="22" height="22"><circle cx="11" cy="11" r="9.500" fill="none" stroke="#c4c4c4" stroke-width="3"/><path d="M4.500 4.500l13 13" stroke="#c4c4c4" stroke-width="3"/></svg>
              <svg class="dim" width="20" height="22"><use href="#newpage"/></svg>
              <svg class="dim" width="22" height="26"><use href="#trash"/></svg>
            </div>
          </section>
        </div>
      </div>
    </section>
  </main>
</div>
<script src="art.js"></script>
</body>
</html>
```
FILE: styles.css
```css
* { box-sizing: border-box; }
html, body { margin: 0; background: #fff; }
body {
  width: 2638px; height: 1978px; overflow: hidden; padding: 76px 112px;
  font: 24px/1 "Liberation Sans", "Noto Sans CJK JP", sans-serif; color: #d6d6d6;
}
.defs { position: absolute; }
svg { display: block; flex: none; color: #c4c4c4; overflow: visible; }
i, em, s, q { font-style: normal; text-decoration: none; }
i, b { display: block; }
q { quotes: none; letter-spacing: .9px; }
.dim { color: #6e6e6e; }
.white { color: #fff; }

.window {
  width: 2414px; height: 1754px; border: 2px solid #383838; border-radius: 12px 12px 4px 4px;
  background: #535353; overflow: hidden;
  box-shadow: 0 0 2px rgba(0,0,0,.5), 0 38px 66px rgba(0,0,0,.44), 0 4px 50px rgba(0,0,0,.13);
}

/* title bar */
.titlebar {
  height: 68px; border-bottom: 2px solid #383838; padding-left: 16px;
  display: grid; align-items: center; justify-items: start;
  grid-template-columns: 134px 59px 19px 51px 751px 698px 26px 174px 48px 12px 1fr;
}
.lights { display: flex; gap: 16px; padding-top: 1px; }
.lights i { width: 24px; height: 24px; border-radius: 50%; background: #f5bf4f; }
.lights .red { background: radial-gradient(#4c0000 4px, #ec6a5e 4.500px); }
.lights .green { background: #61c554; }
.vsep { width: 3px; height: 40px; background: #606060; margin-bottom: 2px; }
.lay, .lchev { margin-bottom: 9px; }
.lchev, .wchev { color: #f0f0f0; }
.wchev { margin-top: 2px; }
.apptitle { font-size: 26px; letter-spacing: .6px; white-space: nowrap; }
.workspace { font-size: 22px; color: #f0f0f0; white-space: nowrap; padding-top: 1px; }
.search {
  width: 413px; height: 42px; border: 2px solid #606060; border-radius: 4px; background: #464646;
  display: flex; align-items: center; padding-left: 6px; gap: 8px; color: #818181; font-size: 22.500px; white-space: nowrap;
}
.search span { padding-top: 9px; }

/* control bar */
.control {
  height: 68px; border-bottom: 2px solid #383838; padding: 0 0 1px 9px;
  display: grid; align-items: center; justify-items: start; white-space: nowrap;
  grid-template-columns: 19px 238px 13px 88px 101px 48px 199px 228px 225px 121px 179px 118px 90px 12px 242px 186px 45px 41px 53px 45px 54px 1fr;
}
.control > svg:nth-child(18) { color: #fff; }
.dots { width: 4px; height: 38px; background: repeating-linear-gradient(#383838 0 2px, transparent 2px 4px); }
.dsep { width: 2px; height: 47px; background: #4a4a4a; }
.under { border-bottom: 2px dotted #ccc; padding-bottom: 2px; padding-top: 4px; }
.drop, .spin, .brush { display: flex; height: 41px; border: 2px solid #606060; border-radius: 4px; background: #464646; color: #fff; overflow: hidden; }
.drop { width: 76px; border-left-width: 1px; }
.drop b, .spin b, .brush b { width: 36px; flex: none; display: flex; flex-direction: column; align-items: center; justify-content: center; }
.drop b, .brush b { padding-left: 2px; }
.drop b svg, .spin b svg, .brush b svg { color: #fff; }
.blank { width: 38px; height: 38px; background: #e2e2e2; }
.spin b { gap: 11px; background: #4b4b4b; }
.spin em { flex: 1; padding: 8px 0 0 6px; font-size: 25px; letter-spacing: .8px; overflow: hidden; white-space: nowrap; }
.spin b:first-child { border-right: 2px solid #606060; }
.spin b:last-child { border-left: 2px solid #606060; }
.w187 { width: 187px; } .w216 { width: 217px; } .w209 { width: 209px; } .w166 { width: 166px; }
.w202 { width: 202px; } .w98 { width: 98px; } .w134 { width: 134px; } .w239 { width: 239px; }
.brush { color: #000; background: linear-gradient(90deg, #e2e2e2 0 calc(100% - 35px), #4b4b4b 0); align-items: center; padding-left: 12px; }
.brush u { flex: 1; height: 4px; background: #000; margin-right: 12px; }
.brush span { margin-right: 7px; }
.control .w209 u { margin-right: 10px; } .control .w209 { padding-left: 9px; }
.btn { height: 40px; border: 2px solid #757575; border-radius: 5px; color: #fff; text-align: center; line-height: 37px; }
.w231 { width: 231px; } .w165 { width: 165px; }

main { display: grid; grid-template-columns: 140px 6px 1648px 6px 610px; height: 1614px; }
.gutter { background: #4a4a4a; border: solid #383838; border-width: 0 2px; }
.colhead { height: 24px; background: #424242; border-bottom: 2px solid #383838; display: flex; align-items: center; justify-content: space-between; padding: 0 11px; }
.grip { width: 39px; height: 8px; background: repeating-linear-gradient(90deg, #383838 0 2px, transparent 2px 4px); }

/* tools */
.toolcol .grip { margin: 6px 0 0 50px; }
.tools { display: grid; grid-template-columns: 60px 60px; grid-auto-rows: 48px; margin: 24px 0 0 10px; }
.tools svg { width: 60px; height: 48px; fill: #c4c4c4; }
.toolcol hr { margin: 4px 10px 8px; border: 0; height: 2px; background: #4a4a4a; }
.fillstroke { margin-left: 10px; }
.trio { display: flex; border: 2px solid #606060; border-radius: 4px; overflow: hidden; }
.toolcol .trio { width: 118px; margin-left: 10px; }
.t42 { height: 41px; margin-top: 10px; } .t38 { height: 39px; margin-top: 9px; }
.trio span { flex: 1; display: flex; align-items: center; justify-content: center; }
.trio span + span { border-left: 2px solid #606060; }
.trio svg { fill: #c4c4c4; }
.trio .on { background: #2e2e2e; }
.b43 .on svg { fill: #fff; }
.screens { margin: 15px 0 0 48px; }
.more { margin: 44px 0 0 55px; fill: #c4c4c4; }

/* document */
.doc { display: grid; grid-template-rows: 58px 1524px 32px; }
.doctabs { display: flex; background: #424242; border-bottom: 2px solid #383838; }
.dtab { display: flex; align-items: center; gap: 20px; padding-left: 16px; font-size: 22px; color: #a8a8a8; border-right: 2px solid #383838; white-space: pre; }
.dtab span { padding-top: 3px; }
.dtab svg { color: #b8b8b8; }
.first { width: 542px; }
.dtab.active { width: 547px; background: #535353; color: #f0f0f0; }
.dtab.active svg { color: #fff; }
.stage { display: grid; grid-template-columns: 1616px 32px; }
#art { background: #fff; overflow: hidden; }
.vscroll { background: #4b4b4b; display: flex; flex-direction: column; align-items: center; justify-content: space-between; padding: 12px 0 12px 2px; }
.vscroll svg { color: #a0a0a0; }
.vscroll i { width: 30px; height: 50px; border-radius: 15px; background: #636363; }
.status { background: #4f4f4f; display: grid; justify-items: start; align-items: center; padding-left: 7px; overflow: hidden;
  grid-template-columns: 153px 65px 137px 117px 361px 23px 1fr; }
.sbox { display: flex; height: 32px; background: #464646; border: 2px solid #5a5a5a; border-bottom: 0; color: #fff; align-self: stretch; }
.sbox em { flex: 1; padding: 9px 0 0 5px; font-size: 22px; letter-spacing: .3px; }
.sbox b { width: 36px; display: flex; justify-content: center; padding-top: 15px; border-left: 2px solid #5a5a5a; }
.sbox b svg { color: #fff; }
.zoomv { width: 138px; } .page { width: 120px; } .page em { padding-left: 7px; }
.nav1, .nav2 { fill: #747474; }
.hint { font-size: 19.800px; padding-top: 9px; white-space: nowrap; color: #e0e0e0; }
.play { fill: #d0d0d0; }
.hscroll { width: 752px; height: 32px; background: #484848; display: grid; grid-template-columns: 340px 380px 10px; padding-left: 10px; align-items: center; }
.hscroll svg { color: #a0a0a0; }
.hscroll i { width: 50px; height: 30px; border-radius: 15px; background: #636363; }

/* dock */
.side .colhead { padding: 0 13px 0 49px; }
.sidegrid { display: grid; grid-template-columns: 74px 6px 530px; height: 1590px; }
.strip { background: #535353; }
.sgroup { border-bottom: 2px solid #383838; display: flex; flex-direction: column; align-items: center; padding: 6px 0 0 3px; fill: #c4c4c4; }
.g1 { height: 194px; } .g2 { height: 195px; } .g3 { height: 137px; }
.g1 svg:nth-child(2) { margin-top: 18px; } .g1 svg:nth-child(3) { margin-top: 23px; } .g1 svg:nth-child(4) { margin-top: 23px; }
.g2 svg:nth-child(2) { margin-top: 14px; } .g2 svg:nth-child(3) { margin-top: 26px; } .g2 svg:nth-child(4) { margin-top: 23px; }
.g3 svg:nth-child(2) { margin-top: 19px; } .g3 svg:nth-child(3) { margin-top: 27px; }

/* panels */
.panel { background: #535353; border-bottom: 2px solid #383838; margin-bottom: 2px; box-shadow: 0 2px #4a4a4a; }
.ptabs { height: 55px; display: flex; background: #424242; font-size: 22px; color: #a8a8a8; box-shadow: inset 0 -2px #383838; }
.ptabs span { display: flex; align-items: center; justify-content: center; padding-top: 1px; border-right: 2px solid #383838; border-bottom: 2px solid #383838; white-space: nowrap; }
.ptabs .on { background: #535353; color: #fff; border-bottom-color: #535353; }
.ptabs .on svg { margin-right: 10px; color: #999; }
.ptabs > svg { margin: 19px 12px 0 auto; }
.w144 { width: 146px; } .w101 { width: 101px; } .w90 { width: 92px; } .w155 { width: 153px; } .w112 { width: 112px; } .w94 { width: 94px; }
.ptabs .w155, .ptabs .w112, .ptabs .w94 { padding-left: 9px; }
.w201 { width: 203px; } .w188 { width: 190px; } .w79 { width: 79px; } .w166b { width: 167px; }
.ptabs .w90, .ptabs .w201 { justify-content: flex-start; padding-left: 9px; }
.swatches { height: 519px; }
.swhead { display: flex; justify-content: space-between; padding: 11px 10px 0 10px; }
.views { display: flex; width: 97px; height: 48px; border: 2px solid #606060; border-radius: 4px; }
.views span { flex: 1; display: flex; align-items: center; justify-content: center; }
.views .on { background: #2e2e2e; }
.swlist { margin: 10px 10px 0; height: 342px; border: 2px solid #606060; display: flex; gap: 2px; }
.swfoot { display: grid; padding: 3px 0 0 22px; height: 34px; fill: #c4c4c4; align-items: center; grid-template-columns: 56px 48px 116px 54px 50px 56px 50px 1fr; }
.stroke { height: 695px; }
.stroke .row { display: flex; }
.stroke label { width: 168px; text-align: right; margin-right: 6px; line-height: 42px; white-space: nowrap; }
.r1 { margin-top: 11px; } .r2 { margin-top: 10px; } .r3 { margin-top: 11px; } .r4 { margin-top: 11px; }
.trio.b43 { width: 135px; height: 43px; }
.trio.two { width: 90px; }
.stroke .ratio { width: 84px; margin-right: 7px; }
.w98 em { padding-left: 10px; }
.stroke hr { border: 0; height: 2px; background: #4a4a4a; margin: 11px 10px; }
.dash { display: flex; align-items: center; padding: 0 10px 0 12px; height: 43px; color: #fff; }
.check { width: 24px; height: 24px; border: 2px solid #c4c4c4; border-radius: 4px; background: #4d4d4d; margin-right: 10px; }
.pair { margin-left: auto; display: flex; width: 153px; height: 43px; border: 2px solid #606060; border-radius: 4px; }
.pair span { flex: 1; display: flex; align-items: center; justify-content: center; }
.pair span + span { border-left: 2px solid #606060; }
.dashgrid { display: grid; grid-template-columns: repeat(6, 78px); gap: 8px; padding: 10px 10px 0; color: #7d7d7d; text-align: center; height: 85px; }
.dashgrid p { margin: 0; }
.dashgrid i { height: 42px; background: #595959; margin-bottom: 6px; }
.dashgrid + hr { margin: 11px 10px 14px; }
.brush.w134 { padding-left: 13px; }
.second { margin-left: 20px; }
.swap { margin: 8px 0 0 21px; }
.r6 { margin-top: 18px; }
.off label { color: #7d7d7d; }
.ghost { display: flex; width: 134px; height: 42px; background: #595959; color: #6c6c6c; }
.ghost b { width: 38px; display: flex; flex-direction: column; gap: 11px; align-items: center; justify-content: center; border-right: 2px solid #535353; }
.ghost svg { color: #747474; }
.ghost em { padding: 11px 0 0 8px; font-size: 25px; letter-spacing: .5px; }
.link { margin: 6px 0 0 18px; }
.r7 { margin-top: 17px; }
.r7 + hr { margin: 12px 10px 13px; }
.f1 { margin: 8px 0 0 21px; } .f2 { margin: 7px 0 0 22px; }
.slim { height: 60px; }
.slim .on { height: 58px; }
.slim .ptabs span { padding-top: 2px; }
.panel:nth-child(n+2) { border-top: 2px solid #383838; }
.appear { height: 250px; border-bottom: 0; }
.alist { margin: 11px 10px 0; width: 510px; height: 141px; border: 2px solid #606060; border-radius: 4px; display: flex; overflow: hidden; }
.arows { flex: 1; }
.arow { height: 50px; border-bottom: 2px solid #606060; display: grid; grid-template-columns: 39px 14px 37px 134px 64px 1fr; padding-left: 10px; align-items: center; white-space: nowrap; }
.arow q { font-size: 25px; }
.arow > i { width: 2px; height: 48px; background: #383838; }
.arow.head { grid-template-columns: 96px 1fr; padding-left: 4px; }
.arow .thumb { width: 40px; height: 40px; border: 2px solid #2b2b2b; background: #fff; box-shadow: inset 0 0 0 2px #fff, inset 0 0 0 4px #bcc0ff; }
.arow .wh { color: #fff; }
.arow s { border-bottom: 2px dotted #ccc; padding-bottom: 2px; }
.ascroll { width: 24px; background: #4a4a4a; display: flex; flex-direction: column; align-items: center; padding: 7px 0; }
.ascroll i { width: 20px; height: 64px; border-radius: 10px; background: #606060; margin: 8px 0 33px; flex: none; }
.ascroll svg { color: #a0a0a0; }
.afoot { display: grid; grid-template-columns: 52px 52px 220px 54px 51px 1fr; padding-left: 24px; height: 38px; align-items: center; fill: #c4c4c4; }
.fx { font: italic 29px "Liberation Sans", sans-serif; color: #c4c4c4; display: flex; align-items: flex-end; }
.fx svg { margin-bottom: 5px; }
```
FILE: art.js
```js
// Draws the T20 gear artwork: twenty teeth plus the lettering ring.
(function () {
  var ns = 'http://www.w3.org/2000/svg';
  var art = document.getElementById('art');
  var cx = 1109.5, cy = 977.5;

  function add(name, attrs, text) {
    var el = document.createElementNS(ns, name);
    for (var k in attrs) el.setAttribute(k, attrs[k]);
    if (text) el.textContent = text;
    art.appendChild(el);
  }

  for (var i = 0; i < 20; i++) {
    var axis = -5.2 + 18 * i;
    add('path', {
      d: 'M-71.9-453.7L-42-459L-45.500-490C-45-520-33-547-18.500-573H18.500C33-547 45-520 45.500-490L42-459L71.900-453.700',
      transform: 'translate(' + cx + ' ' + cy + ') rotate(' + axis + ')',
      fill: 'none', stroke: '#ea3323', 'stroke-width': 23.5, 'stroke-linecap': 'square'
    });
    [-1.85, 1.85].forEach(function (off) {
      var a = (axis + off) * Math.PI / 180;
      add('rect', {
        x: cx + 574 * Math.sin(a) - 10.5, y: cy - 574 * Math.cos(a) - 10.5,
        width: 21, height: 21, fill: '#ea3323'
      });
    });
  }

  // [character, angle in degrees clockwise from the top, horizontal scale]
  var ring = [
    ['*', -56.5, 1], ['1', -47.2, .9], ['N', -29.1, .72], ['=', -18.5, .95], ['2', -7.3, .95], ['0', 2.3, .88],
    ['P', 21, .8], ['I', 29, .9], ['t', 37.3, 1.3], ['c', 48.4, 1], ['h', 57.5, .95],
    ['D', 78.5, .72], ['=', 87.5, .95], ['0', 97.5, .88], ['.', 103.2, 1], ['4', 111.2, .95], ['4', 122, .95],
    ['P', 139.4, .8], ['=', 151.4, .95], ['4', 162.8, .95], ['5', 172.8, .95],
    ['P', 192.8, .8], ['A', 203, .75], ['=', 214.7, .95], ['2', 224.4, .95], ['0', 235.3, .88]
  ];
  ring.forEach(function (c) {
    var star = c[0] === '*';
    add('text', {
      transform: 'translate(' + cx + ' ' + cy + ') rotate(' + c[1] + ') translate(0 ' + (star ? -256 : -315) + ') scale(' + c[2] + ' 1)',
      'text-anchor': 'middle', 'font-family': 'Liberation Sans', 'font-size': star ? 186 : 103,
      fill: '#001ef5', stroke: '#001ef5', 'stroke-width': 4
    }, c[0]);
  });
})();
```
